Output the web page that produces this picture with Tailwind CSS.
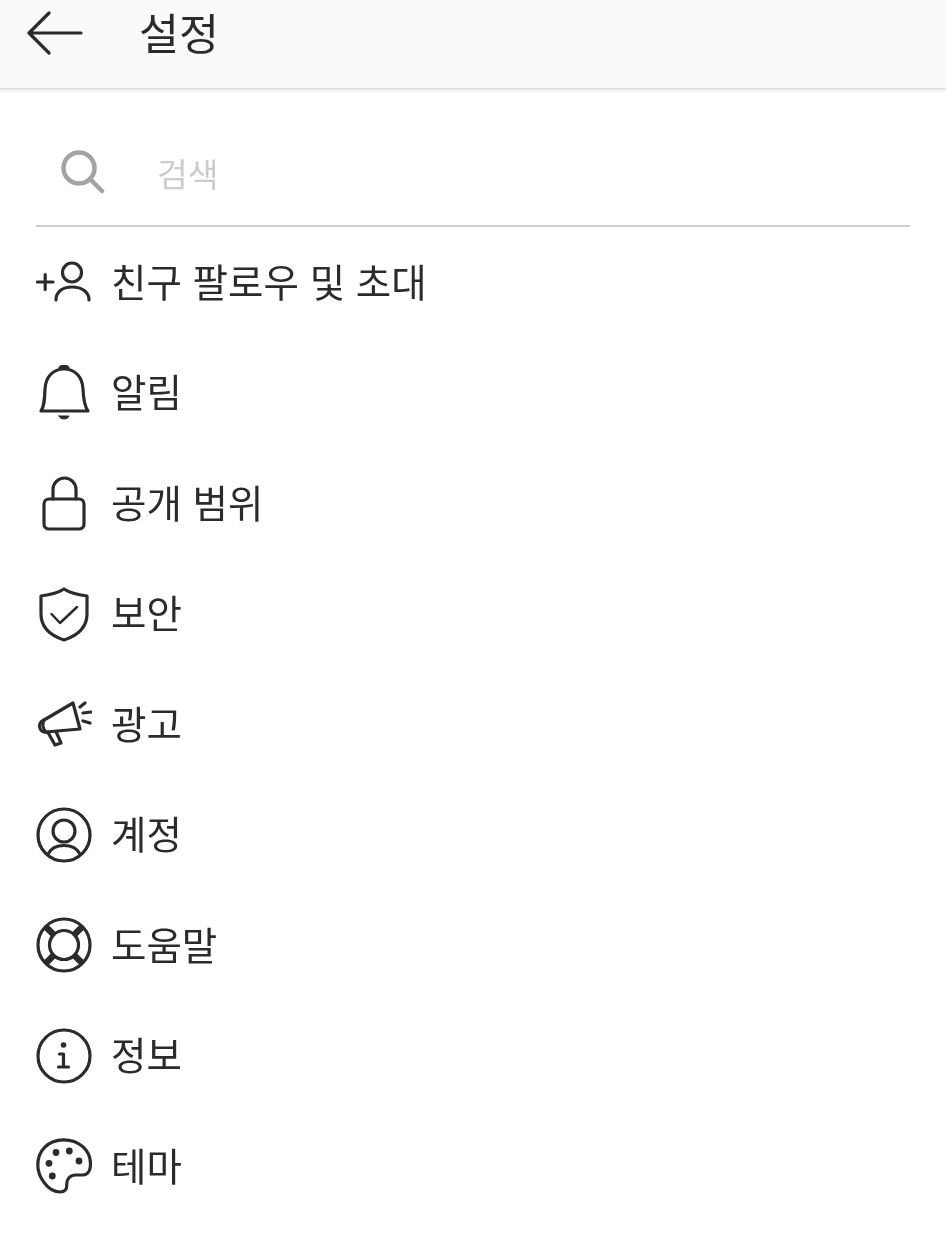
<!DOCTYPE html>
<html lang="ko">
  <head>
    <meta charset="UTF-8" />
    <meta name="viewport" content="width=device-width, initial-scale=1.0" />
    <title>설정</title>
    <script src="https://cdn.jsdelivr.net/npm/@tailwindcss/browser@4"></script>
  </head>
  <body class="bg-white font-['Noto_Sans_CJK_KR',sans-serif] text-[#2b2b2b]">
    <div class="w-[946px] h-[1240px] overflow-hidden blur-[0.5px]">
      <!-- header -->
      <header class="relative h-[89px] bg-[#fafafa] border-b border-[#dcdcdc] shadow-[0_2px_3px_rgba(0,0,0,0.1)] flex items-center gap-[55px] pl-[26px] pb-[22px]">
        <svg class="w-[58px] h-[44px]" viewBox="0 0 58 44" fill="none" stroke="#2b2b2b" stroke-width="3.2" stroke-linecap="round" stroke-linejoin="round">
          <path d="M3 22H55M23 2L3 22L23 42" />
        </svg>
        <h1 class="text-[43.5px] leading-none font-normal pb-[2px]">설정</h1>
      </header>

      <!-- search -->
      <div class="mx-9 h-[138px] border-b-2 border-[#cfcfcf] flex items-center pl-[25px] pt-[22px]">
        <svg class="w-[44px] h-[44px] mt-[8px]" viewBox="0 0 44 44" fill="none" stroke="#a3a3a3" stroke-width="4.5" stroke-linecap="round">
          <circle cx="18" cy="18" r="15.5" />
          <path d="M29 29L41 41" />
        </svg>
        <span class="ml-[52px] text-[33.500px] leading-none text-[#cdcdcd] pt-[10px]">검색</span>
      </div>

      <!-- menu -->
      <ul class="pl-9">
        <li class="h-[110.5px] flex items-center gap-[19px]">
          <svg class="w-14 h-14 shrink-0" viewBox="0 0 56 56" fill="none" stroke="#2b2b2b" stroke-width="3.2" stroke-linecap="round" stroke-linejoin="round">
            <path d="M1.5 28H17M9.2 20.500V35.500" />
            <circle cx="36" cy="18.500" r="9.500" />
            <path d="M20 46C20 38 26 33 36 33C46 33 53 38 53 46" />
          </svg>
          <span class="text-[38.500px] leading-none pb-[5px]">친구 팔로우 및 초대</span>
        </li>
        <li class="h-[110.5px] flex items-center gap-[19px]">
          <svg class="w-14 h-14 shrink-0" viewBox="0 0 56 56" fill="none" stroke="#2b2b2b" stroke-width="3.2" stroke-linecap="round" stroke-linejoin="round">
            <path d="M5 46H52C49 42 47.500 36 47 24C46.500 12 39 4 28 4C17 4 9.500 12 9 24C8.500 36 8 42 5 46Z" />
            <path d="M24 3C25 0.500 31 0.500 32 3Z" fill="#2b2b2b" />
            <path d="M23 51H33C32 55 24 55 23 51Z" fill="#2b2b2b" stroke-width="1" />
          </svg>
          <span class="text-[38.500px] leading-none pb-[5px]">알림</span>
        </li>
        <li class="h-[110.5px] flex items-center gap-[19px]">
          <svg class="w-14 h-14 shrink-0" viewBox="0 0 56 56" fill="none" stroke="#2b2b2b" stroke-width="3.2" stroke-linecap="round" stroke-linejoin="round">
            <rect x="8" y="24" width="40" height="30" rx="5" />
            <path d="M17 24V14.500A11.500 11.500 0 0 1 40 14.500V24" />
          </svg>
          <span class="text-[38.500px] leading-none pb-[5px]">공개 범위</span>
        </li>
        <li class="h-[110.5px] flex items-center gap-[19px]">
          <svg class="w-14 h-14 shrink-0" viewBox="0 0 56 56" fill="none" stroke="#2b2b2b" stroke-width="3.2" stroke-linecap="round" stroke-linejoin="round">
            <path d="M28 3C22 7 13 9 5 10V28C5 42 16 50 28 54C40 50 51 42 51 28V10C43 9 34 7 28 3Z" />
            <path d="M15.500 28L24 37L41 21" stroke-width="2.500" />
          </svg>
          <span class="text-[38.500px] leading-none pb-[5px]">보안</span>
        </li>
        <li class="h-[110.5px] flex items-center gap-[19px]">
          <svg class="w-14 h-14 shrink-0" viewBox="0 0 56 56" fill="none" stroke="#2b2b2b" stroke-width="3.2" stroke-linecap="round" stroke-linejoin="round">
            <path d="M8 24L37 7L44 33L10 36C3 37 1 27 8 24Z" />
            <path d="M8 24C6 28 7 33 10 36" />
            <path d="M12 36.500L19 49L25 47L20 35.500" />
            <path d="M44 11L49 7M47 17L55 16M47 25L54 27" />
          </svg>
          <span class="text-[38.500px] leading-none pb-[5px]">광고</span>
        </li>
        <li class="h-[110.5px] flex items-center gap-[19px]">
          <svg class="w-14 h-14 shrink-0" viewBox="0 0 56 56" fill="none" stroke="#2b2b2b" stroke-width="3.2" stroke-linecap="round" stroke-linejoin="round">
            <circle cx="28" cy="28" r="26" />
            <circle cx="28" cy="24" r="11" />
            <path d="M12 47C15 41 21 38.500 28 38.500C35 38.500 41 41 44 47" />
          </svg>
          <span class="text-[38.500px] leading-none pb-[5px]">계정</span>
        </li>
        <li class="h-[110.5px] flex items-center gap-[19px]">
          <svg class="w-14 h-14 shrink-0" viewBox="0 0 56 56" fill="none" stroke="#2b2b2b" stroke-width="3.2" stroke-linecap="round">
            <circle cx="28" cy="28" r="26" />
            <circle cx="28" cy="28" r="14.500" />
            <path d="M9.500 9.500L17.500 17.500M46.500 9.500L38.500 17.500M9.500 46.500L17.500 38.500M46.500 46.500L38.500 38.500" stroke-width="6.500" stroke-linecap="butt" />
          </svg>
          <span class="text-[38.500px] leading-none pb-[5px]">도움말</span>
        </li>
        <li class="h-[110.5px] flex items-center gap-[19px]">
          <svg class="w-14 h-14 shrink-0" viewBox="0 0 56 56" fill="none" stroke="#2b2b2b" stroke-width="3.2" stroke-linecap="round" stroke-linejoin="round">
            <circle cx="28" cy="28" r="26" />
            <circle cx="27.500" cy="17" r="2.800" fill="#2b2b2b" stroke="none" />
            <path d="M23.500 26H27.500V39M22.500 39H32.500" />
          </svg>
          <span class="text-[38.500px] leading-none pb-[5px]">정보</span>
        </li>
        <li class="h-[110.5px] flex items-center gap-[19px]">
          <svg class="w-14 h-14 shrink-0" viewBox="0 0 56 56" fill="none" stroke="#2b2b2b" stroke-width="3.2" stroke-linecap="round" stroke-linejoin="round">
            <path d="M27.500 1.800C12 1.800 1.800 13 1.800 27C1.800 39 12 54 24 54C29 54 31 51 30.700 47C30.400 41 34 37 40 37H47C52 37 54.500 32 54.500 26C54.500 12 43 1.800 27.500 1.800Z" />
            <circle cx="20" cy="14.500" r="3.400" fill="#2b2b2b" stroke="none" />
            <circle cx="33.300" cy="13" r="3.400" fill="#2b2b2b" stroke="none" />
            <circle cx="43" cy="23" r="3.400" fill="#2b2b2b" stroke="none" />
            <circle cx="13" cy="25.300" r="3.400" fill="#2b2b2b" stroke="none" />
            <circle cx="16.300" cy="38" r="3.400" fill="#2b2b2b" stroke="none" />
          </svg>
          <span class="text-[38.500px] leading-none pb-[5px]">테마</span>
        </li>
      </ul>
    </div>
  </body>
</html>
